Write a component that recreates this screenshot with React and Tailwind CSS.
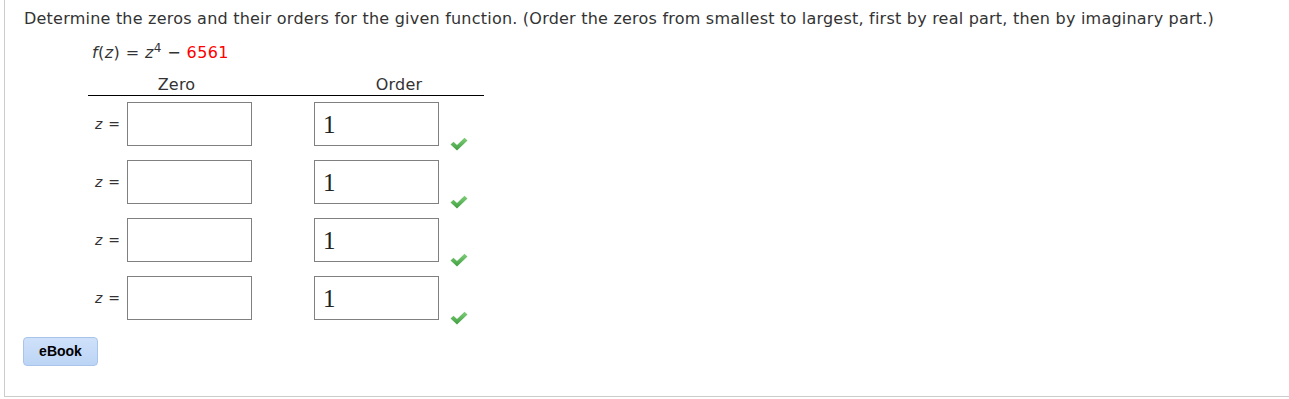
import React from "react";

function Check() {
  return (
    <svg width="18" height="14" viewBox="0 0 18 14" className="block">
      <defs>
        <linearGradient id="cg" x1="0" y1="0" x2="0" y2="1">
          <stop offset="0" stopColor="#7fcf7a" />
          <stop offset="1" stopColor="#3f9e3f" />
        </linearGradient>
      </defs>
      <path d="M0.5 7.5 L3.5 4.8 L7 8 L14.5 0.8 L17.5 3.6 L7 13.5 Z" fill="url(#cg)" />
    </svg>
  );
}

function Row() {
  return (
    <div className="flex items-start h-[58px]">
      <div className="w-[39px] h-[44px] flex items-center justify-end pr-[7px] text-[14px] text-[#333]">
        <span className="italic">z</span>
        <span className="ml-[6px]">=</span>
      </div>
      <div className="w-[125px] h-[44px] border border-[#808080] bg-white" />
      <div className="w-[62px]" />
      <div className="w-[125px] h-[44px] border border-[#808080] bg-white flex items-center pl-[8px] text-[25px] leading-none text-[#222] font-['Liberation_Serif',serif]">
        1
      </div>
      <div className="pt-[35px] pl-[11px]">
        <Check />
      </div>
    </div>
  );
}

export default function App() {
  return (
    <div className="w-[1289px] h-[399px] bg-white font-['DejaVu_Sans',sans-serif]">
      <div className="ml-[4px] h-[397px] border-l border-b border-[#cccccc] pl-[19px] pt-[9px] text-[#333]">
        <div className="text-[16px] tracking-[0.22px] leading-[20px] whitespace-nowrap">
          Determine the zeros and their orders for the given function. (Order the zeros from smallest to largest, first by real part, then by imaginary part.)
        </div>
        <div className="mt-[14px] ml-[68px] text-[16px] tracking-[0.4px] leading-[20px] whitespace-nowrap">
          <span className="italic">f</span>(<span className="italic">z</span>) = <span className="italic">z</span>
          <sup className="text-[12px]">4</sup> − <span className="text-[#ff0000]">6561</span>
        </div>
        <div className="ml-[64px] mt-[12px] w-[396px]">
          <div className="relative border-b border-black h-[21px] text-[16px] tracking-[0.22px] leading-[20px]">
            <div className="absolute left-[0px] w-[177px] text-center">Zero</div>
            <div className="absolute left-[221px] w-[180px] text-center">Order</div>
          </div>
          <div className="pt-[6px]">
            <Row />
            <Row />
            <Row />
            <Row />
          </div>
        </div>
        <button className="mt-[3px] ml-[-1px] w-[75px] h-[29px] rounded-[4px] border border-[#a9c4ea] bg-[linear-gradient(#cfe1fa,#bcd4f5)] text-[14px] font-bold text-black font-['Liberation_Sans',sans-serif]">
          eBook
        </button>
      </div>
    </div>
  );
}
